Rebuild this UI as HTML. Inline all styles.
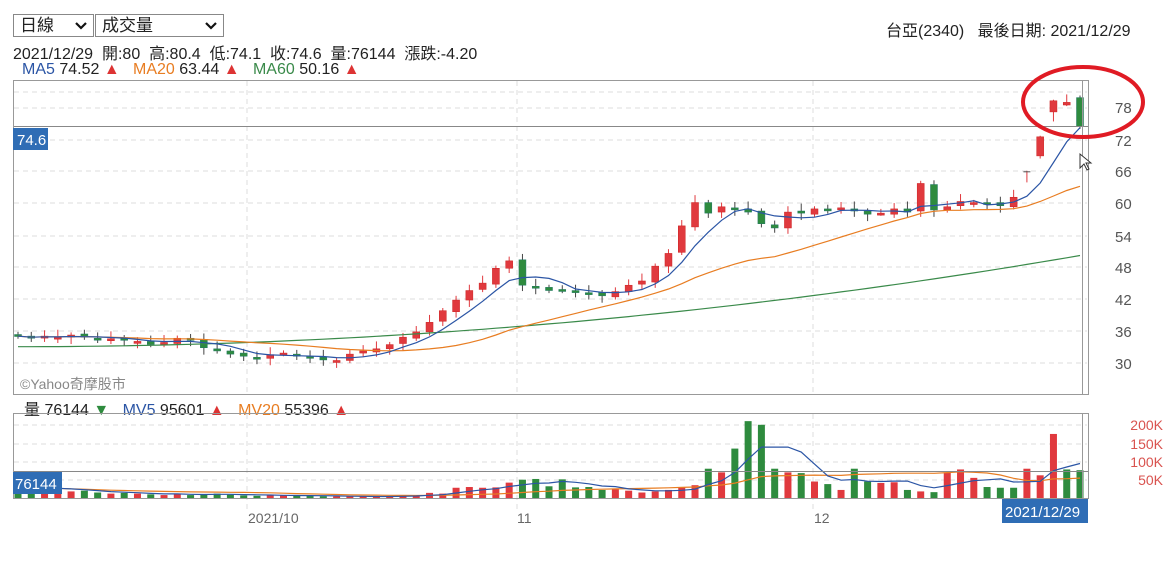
<!DOCTYPE html>
<html><head><meta charset="utf-8">
<style>
body{margin:0;background:#fff;font-family:"Liberation Sans","Noto Sans CJK TC",sans-serif;width:1174px;height:580px;overflow:hidden;position:relative;color:#222}
.sel{position:absolute;top:14px;height:23px;border:1px solid #888;font-size:17px;line-height:22px;padding-left:6px;box-sizing:border-box;background:#fff}
.sel svg{position:absolute;right:6px;top:7px}
.t{position:absolute;font-size:16px;white-space:nowrap}
</style></head><body>
<div class="sel" style="left:13px;width:81px">日線<svg width="12" height="8"><path d="M1 1 L6 6 L11 1" fill="none" stroke="#111" stroke-width="2.2"/></svg></div>
<div class="sel" style="left:95px;width:129px">成交量<svg width="12" height="8"><path d="M1 1 L6 6 L11 1" fill="none" stroke="#111" stroke-width="2.2"/></svg></div>
<div class="t" style="left:886px;top:17px">台亞(2340)&nbsp;&nbsp; 最後日期: 2021/12/29</div>
<div class="t" style="left:13px;top:40px">2021/12/29&nbsp; 開:80&nbsp; 高:80.4&nbsp; 低:74.1&nbsp; 收:74.6&nbsp; 量:76144&nbsp; 漲跌:-4.20</div>
<div class="t" style="left:22px;top:61px"><span style="color:#2b55a5">MA5</span> 74.52 <span style="color:#d33">▲</span>&nbsp;&nbsp; <span style="color:#e87d22">MA20</span> 63.44 <span style="color:#d33">▲</span>&nbsp;&nbsp; <span style="color:#3a8a4a">MA60</span> 50.16 <span style="color:#d33">▲</span></div>
<div class="t" style="left:24px;top:396px">量 76144 <span style="color:#2e8b3e">▼</span>&nbsp;&nbsp; <span style="color:#2b55a5">MV5</span> 95601 <span style="color:#d33">▲</span>&nbsp;&nbsp; <span style="color:#e87d22">MV20</span> 55396 <span style="color:#d33">▲</span></div>
<svg id="s" width="1174" height="580" style="position:absolute;left:0;top:0" xmlns="http://www.w3.org/2000/svg" font-family="Liberation Sans, sans-serif"></svg>
<script>
var s=document.getElementById('s'),h='';
function Y(p){return 140+(72-p)*5.3}
[92,108,140,171,203,236,267,299,331,363].forEach(function(y){h+='<line x1="14" x2="1087" y1="'+y+'" y2="'+y+'" stroke="#ddd" stroke-dasharray="5,4"/>'});
[425,444,462,480].forEach(function(y){h+='<line x1="14" x2="1087" y1="'+y+'" y2="'+y+'" stroke="#ddd" stroke-dasharray="5,4"/>'});
[247,517,813].forEach(function(x){h+='<line x1="'+x+'" x2="'+x+'" y1="81" y2="394" stroke="#ddd" stroke-dasharray="5,4"/><line x1="'+x+'" x2="'+x+'" y1="414" y2="512" stroke="#ddd" stroke-dasharray="5,4"/>'});
h+='<rect x="13.5" y="80.5" width="1075" height="314" fill="none" stroke="#999"/>';
h+='<rect x="13.5" y="413.5" width="1075" height="85" fill="none" stroke="#999"/>';
var C=[35,34.6,35,34.8,35.2,34.8,34.4,34.5,34.2,34,33.4,33.8,34.6,34.2,32.8,32.2,31.6,31.2,30.8,31.5,31.8,31.2,30.8,30.5,30.4,31.6,32.2,32.6,33.4,34.8,35.8,37.6,39.8,41.8,43.6,45,47.8,49.2,44.6,44.2,43.6,43.8,43.2,43,42.6,43.4,44.6,45.4,48.2,50.6,55.8,60.2,58.2,59.4,59,58.4,56.2,55.4,58.4,58.2,59,58.8,59.2,58.6,58,58.2,59,58.4,63.8,58.8,59.4,60.4,60.2,60,59.6,61.2,66,72.6,79.4,79,74.6];
var OV={76:[66,66,66.2,64],77:[69,72.6,72.8,68.5],78:[77.3,79.4,79.6,75.5],79:[78.6,79.1,80.6,78.4],80:[80,74.6,80.4,74.1]};
var n=C.length,st=(1080-18)/(n-1);
var V=[30,28,26,22,18,20,15,12,14,12,10,8,12,8,10,12,9,7,6,7,8,6,6,5,4,4,4,4,5,6,8,14,12,28,30,28,29,42,50,52,32,51,29,30,22,24,20,15,18,22,30,35,80,70,135,210,200,80,70,68,45,38,22,80,45,41,43,22,18,16,70,78,55,30,28,15,8,22,62,175,76,76];
V=V.slice(0,n);V[75]=28;V[76]=80;V[77]=62;V[78]=175;V[79]=78;V[80]=76;
var VC={75:'g',76:'r',77:'r',78:'r',79:'g',80:'g'};
var X=function(i){return 18+i*st};
var bars='',vol='';
for(var i=0;i<n;i++){var c=C[i],o=i?C[i-1]+(i%3-1)*0.2:c+0.3;
var hi=Math.max(o,c)+0.5+(i%4)*0.3,lo=Math.min(o,c)-0.5-(i%5)*0.2;
if(OV[i]){o=OV[i][0];c=OV[i][1];hi=OV[i][2];lo=OV[i][3];}
var up=c>=o,col=up?'#e0393e':'#2e8b3e';
var x=X(i);h+='<line x1="'+x+'" x2="'+x+'" y1="'+Y(hi)+'" y2="'+Y(lo)+'" stroke="'+(up?'#e0393e':'#444')+'"/>';
var t=Y(Math.max(o,c)),b=Y(Math.min(o,c));if(b-t<2)b=t+2;
if(i==76){h+='<line x1="'+(x-3.5)+'" x2="'+(x+3.5)+'" y1="'+t+'" y2="'+t+'" stroke="#555"/>';}else
bars+='<rect x="'+(x-3.5)+'" y="'+t+'" width="7" height="'+(b-t)+'" fill="'+col+'" stroke="'+(up?'#c22':'#276')+'" stroke-width=".5"/>';
var vc=VC[i]?(VC[i]=='g'?'#2e8b3e':'#e0393e'):col;
var vh=V[i]*0.366;vol+='<rect x="'+(x-3.5)+'" y="'+(498-vh)+'" width="7" height="'+vh+'" fill="'+vc+'"/>';}
h+=bars+vol;
function ma(a,k){var r=[];for(var i=0;i<a.length;i++){var m=Math.max(0,i-k+1),s2=0;for(var j=m;j<=i;j++)s2+=a[j];r.push(s2/(i-m+1))}return r}
function pl(a,f,col){var p='';a.forEach(function(v,i){p+=(i?'L':'M')+X(i).toFixed(1)+' '+f(v).toFixed(1)});return '<path d="'+p+'" fill="none" stroke="'+col+'" stroke-width="1.2"/>'}
var m60=C.map(function(v,i){return 33+(i/(n-1))*(i/(n-1))*17.2});
h+=pl(m60,Y,'#3a8a4a');h+=pl(ma(C,20),Y,'#e87d22');h+=pl(ma(C,5),Y,'#2b55a5');
var VY=function(v){return 498-v*0.366};
h+=pl(ma(V,20),VY,'#e87d22');h+=pl(ma(V,5),VY,'#2b55a5');
[[72,140],[66,171],[60,203],[54,236],[48,267],[42,299],[36,331],[30,363]].forEach(function(a){h+='<text x="1115" y="'+(a[1]+6)+'" font-size="15" fill="#555">'+a[0]+'</text>'});
h+='<text x="1115" y="113" font-size="15" fill="#555">78</text>';
[['200K',425],['150K',444],['100K',462],['50K',480]].forEach(function(a){h+='<text x="1163" y="'+(a[1]+5)+'" font-size="14" fill="#d9534f" text-anchor="end">'+a[0]+'</text>'});
h+='<line x1="14" x2="1088" y1="126.5" y2="126.5" stroke="#888"/><line x1="1082.5" x2="1082.5" y1="81" y2="394" stroke="#999"/>';
h+='<line x1="14" x2="1088" y1="471.5" y2="471.5" stroke="#888"/><line x1="1082.5" x2="1082.5" y1="414" y2="498" stroke="#999"/>';
h+='<rect x="13" y="128" width="35" height="22" fill="#2f6db5"/><text x="17" y="145" font-size="15" fill="#fff">74.6</text>';
h+='<rect x="13" y="472" width="49" height="22" fill="#2f6db5"/><text x="15" y="489" font-size="15" fill="#fff">76144</text>';
h+='<rect x="1002" y="499" width="86" height="24" fill="#2f6db5"/><text x="1005" y="517" font-size="15" fill="#fff">2021/12/29</text>';
h+='<text x="248" y="523" font-size="14" fill="#666">2021/10</text><text x="517" y="523" font-size="14" fill="#666">11</text><text x="814" y="523" font-size="14" fill="#666">12</text>';
h+='<text x="20" y="389" font-size="14" fill="#888">©Yahoo奇摩股市</text>';
h+='<ellipse cx="1083" cy="102" rx="60" ry="35" fill="none" stroke="#e01b24" stroke-width="4"/>';
h+='<path d="M1080 154 L1080 168 L1084 164 L1087 170 L1089 169 L1086 163 L1091 163 Z" fill="#fff" stroke="#333"/>';
s.innerHTML=h;
</script>
</body></html>
